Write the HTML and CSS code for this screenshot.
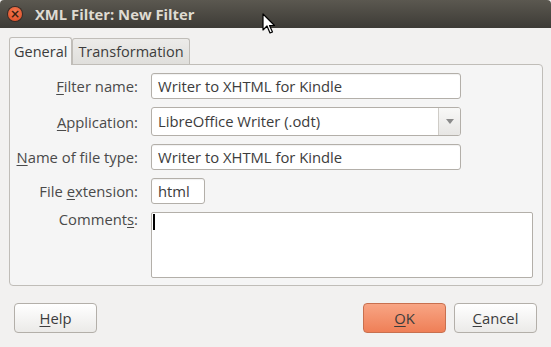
FILE: index.html
```html
<!DOCTYPE html>
<html lang="en">
<head>
    <meta charset="UTF-8">
    <meta name="viewport" content="width=device-width, initial-scale=1.0">
    <title>XML Filter: New Filter</title>
    <link rel="stylesheet" href="styles.css">
</head>
<body>
    <div class="window">
        <div class="titlebar">
            <span class="close">&times;</span>
            <span class="title">XML Filter: New Filter</span>
            <svg class="cursor" width="14" height="22" viewBox="0 0 14 22">
                <path d="M1 1 L1 17 L5 13 L8 20 L10.5 19 L7.5 12.5 L12.5 12.5 Z" fill="#fff" stroke="#000" stroke-width="1.2" stroke-linejoin="round"/>
            </svg>
        </div>

        <div class="dialog">
            <div class="tabs">
                <div class="tab active">General</div>
                <div class="tab">Transformation</div>
            </div>

            <div class="panel">
                <div class="form">
                    <label><u>F</u>ilter name:</label>
                    <div class="entry wide">Writer to XHTML for Kindle</div>

                    <label><u>A</u>pplication:</label>
                    <div class="combo">
                        <span class="combo-text">LibreOffice Writer (.odt)</span>
                        <span class="combo-btn"><span class="arrow"></span></span>
                    </div>

                    <label><u>N</u>ame of file type:</label>
                    <div class="entry wide">Writer to XHTML for Kindle</div>

                    <label>File <u>e</u>xtension:</label>
                    <div class="entry short">html</div>

                    <label class="top">Comment<u>s</u>:</label>
                    <div class="textarea"><span class="caret"></span></div>
                </div>
            </div>

            <div class="buttons">
                <button class="btn"><u>H</u>elp</button>
                <div class="right">
                    <button class="btn ok"><u>O</u>K</button>
                    <button class="btn"><u>C</u>ancel</button>
                </div>
            </div>
        </div>
    </div>
</body>
</html>
```

FILE: styles.css
```css
body {
    margin: 0;
    font-family: "Open Sans", "DejaVu Sans", sans-serif;
    font-size: 14.5px;
    color: #3c3c3c;
    background: #f2f1f0;
}
u {
    text-decoration: underline;
    text-underline-offset: 2px;
}
.window {
    width: 551px;
    height: 347px;
    overflow: hidden;
    background: #f2f1f0;
}
.titlebar {
    position: relative;
    height: 28px;
    display: flex;
    align-items: center;
    background: linear-gradient(#5b5850, #3d3b36);
    border-radius: 4px 4px 0 0;
}
.close {
    width: 14px;
    height: 14px;
    margin-left: 8px;
    border-radius: 50%;
    background: radial-gradient(circle at 50% 35%, #f47a52, #dd4a22);
    box-shadow: 0 0 0 1px #3a2a24;
    color: #3a2010;
    font-size: 12px;
    line-height: 14px;
    text-align: center;
    font-family: "DejaVu Sans", sans-serif;
    font-weight: bold;
}
.title {
    margin-left: 13px;
    color: #dfdbd2;
    font-family: "Open Sans", "DejaVu Sans", sans-serif;
    font-weight: bold;
    font-size: 14.8px;
}
.cursor {
    position: absolute;
    left: 262px;
    top: 13px;
}
.dialog {
    padding: 8px 9px 0 9px;
}
.tabs {
    display: flex;
    align-items: flex-end;
    height: 28px;
}
.tab {
    height: 25px;
    padding: 0 5px;
    line-height: 25px;
    font-size: 14.5px;
    border: 1px solid #c0bdb8;
    border-bottom: none;
    border-radius: 3px 3px 0 0;
    background: linear-gradient(#ecebe9, #e0dfdc);
    color: #3c3c3c;
}
.tab.active {
    height: 27px;
    line-height: 28px;
    padding: 0 4px;
    background: #f5f5f5;
    position: relative;
    top: 1px;
    z-index: 1;
}
.panel {
    height: 222px;
    background: #f5f5f5;
    border: 1px solid #c0bdb8;
    border-radius: 0 4px 4px 4px;
    box-sizing: border-box;
    width: 534px;
    padding: 8px 0 0 0;
}
.form {
    display: grid;
    grid-template-columns: 128px 310px;
    column-gap: 13px;
    row-gap: 8px;
    align-items: center;
}
.form label {
    text-align: right;
    color: #4a4a4a;
    font-size: 14.8px;
}
.form label.top {
    align-self: start;
    margin-top: -3px;
}
.entry {
    height: 26px;
    box-sizing: border-box;
    border: 1px solid #b3afa9;
    border-radius: 3px;
    background: #fff;
    box-shadow: inset 0 1px 1px rgba(0,0,0,0.06);
    padding-left: 6px;
    line-height: 24px;
    font-size: 14.8px;
    color: #3c3c3c;
}
.entry.short {
    width: 54px;
}
.combo {
    height: 29px;
    box-sizing: border-box;
    border: 1px solid #b3afa9;
    border-radius: 3px;
    background: #fff;
    display: flex;
    overflow: hidden;
    font-size: 14.8px;
}
.combo-text {
    flex: 1;
    padding-left: 6px;
    line-height: 27px;
}
.combo-btn {
    width: 21px;
    border-left: 1px solid #cfccc7;
    background: linear-gradient(#f8f8f7, #e7e6e4);
    display: flex;
    align-items: center;
    justify-content: center;
}
.arrow {
    width: 0;
    height: 0;
    border-left: 4px solid transparent;
    border-right: 4px solid transparent;
    border-top: 5px solid #8a8a8a;
}
.textarea {
    width: 382px;
    height: 66px;
    box-sizing: border-box;
    border: 1px solid #b3afa9;
    border-radius: 2px;
    background: #fff;
    padding: 1px 0 0 1px;
}
.caret {
    display: block;
    width: 2px;
    height: 16px;
    background: #000;
}
.buttons {
    display: flex;
    justify-content: space-between;
    margin-top: 17px;
    padding: 0 5px;
}
.right {
    display: flex;
    gap: 8px;
}
.btn {
    width: 83px;
    height: 30px;
    border: 1px solid #b3afa9;
    border-radius: 4px;
    background: linear-gradient(#ffffff, #ebeae8);
    font-family: "Open Sans", "DejaVu Sans", sans-serif;
    font-size: 14.8px;
    color: #3c3c3c;
    padding: 0;
}
.btn.ok {
    background: linear-gradient(#f8a584, #ef7f57);
    border-color: #c8704f;
}
```
